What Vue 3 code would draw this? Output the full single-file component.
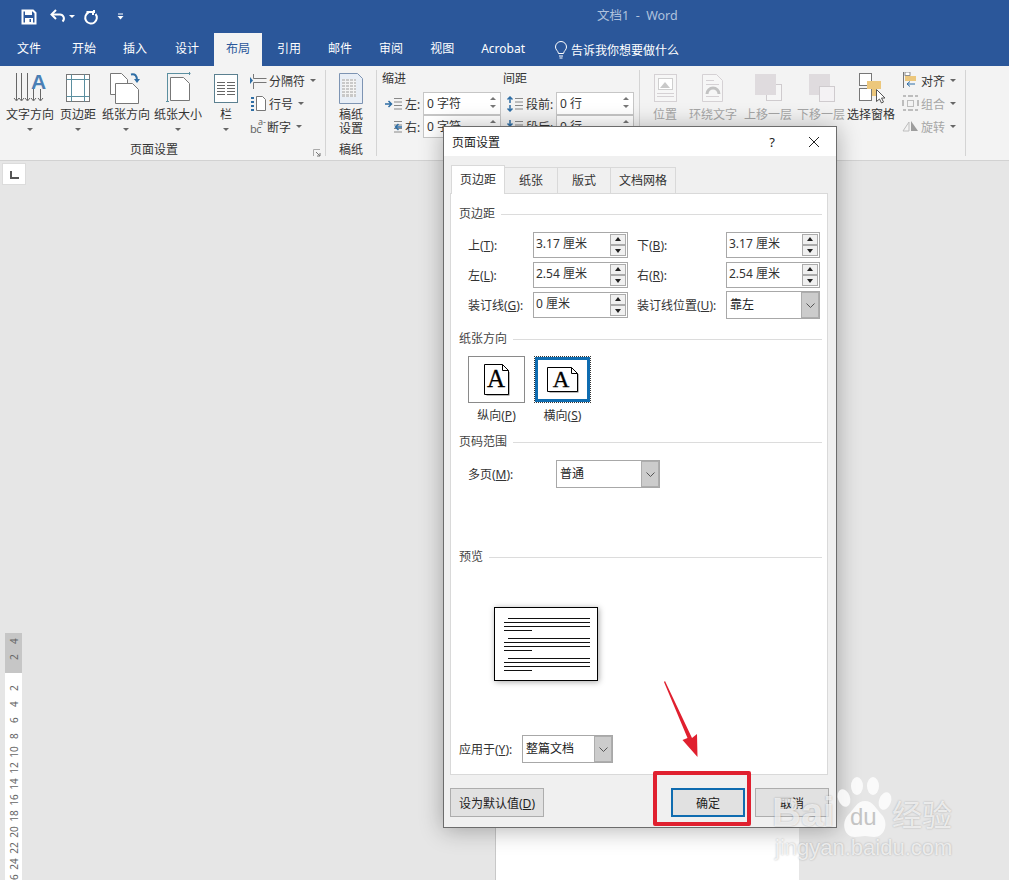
<template>
  <div class="word">
    <header class="titlebar">
      <div class="qat">
        <svg class="qat-save" width="16" height="16" viewBox="0 0 16 16"><path d="M1.500 1.500h10.500l2.500 2.500v10.500h-13z" fill="none" stroke="#fff" stroke-width="2"/><rect x="4" y="2" width="7" height="4" fill="#fff"/><rect x="4" y="9" width="8" height="5" fill="#fff"/><rect x="8.500" y="10" width="1.500" height="3" fill="#2b579a"/></svg>
        <svg class="qat-undo" width="16" height="16" viewBox="0 0 16 16"><path d="M2 5.500h7.500a4 4 0 0 1 3 7" fill="none" stroke="#fff" stroke-width="2"/><path d="M6 1L1.500 5.500 6 10" fill="none" stroke="#fff" stroke-width="2"/></svg>
        <i class="caret white"></i>
        <svg class="qat-redo" width="16" height="16" viewBox="0 0 16 16"><path d="M5.500 3.500a5.800 5.800 0 1 0 7 1.500" fill="none" stroke="#fff" stroke-width="2"/><path d="M3.500 3h7.500V1" fill="none" stroke="#fff" stroke-width="2"/><path d="M10 2v4" stroke="#fff" stroke-width="2"/></svg>
        <svg class="qat-more" width="7" height="7" viewBox="0 0 7 7"><path d="M1 1h5" stroke="#fff"/><path d="M.5 3h6L3.500 6.500z" fill="#fff"/></svg>
      </div>
      <span class="doc-title">文档1 &nbsp;-&nbsp; Word</span>
    </header>

    <nav class="tabs">
      <a v-for="t in ribbonTabs" :key="t" class="tab" :class="{ active: t === '布局' }">{{ t }}</a>
      <span class="tell">
        <svg width="14" height="18" viewBox="0 0 14 18"><path d="M4.500 12.500C4 9.500 1.500 9 1.500 6a5.500 5.500 0 0 1 11 0c0 3-2.500 3.500-3 6.500zM5 15h4M5.500 17h3" fill="none" stroke="#fff"/></svg>
        告诉我你想要做什么
      </span>
    </nav>

    <section class="ribbon">
      <!-- 页面设置 -->
      <div class="group g-page">
        <div class="group-body">
          <button class="big">
            <svg width="48" height="34" viewBox="0 0 48 34"><g stroke="#666" fill="none"><path d="M10.500 3v27M15.500 3v27M21.500 3v27M27.500 19v11M34.500 19v11"/><path d="M8 28l2.500 3 2.500-3M13 28l2.500 3 2.500-3M19 28l2.500 3 2.500-3M25 28l2.500 3 2.500-3M32 28l2.500 3 2.500-3"/></g><text x="32.500" y="18.500" class="ico-a">A</text></svg>
            <span>文字方向</span><i class="caret"></i>
          </button>
          <button class="big">
            <svg width="48" height="34" viewBox="0 0 48 34"><rect x="12.500" y="4.500" width="23" height="27" fill="#fff" stroke="#777"/><path d="M17.500 4.500v27M30.500 4.500v27M12.500 9.500h23M12.500 26.500h23" stroke="#5b8fa0" fill="none"/></svg>
            <span>页边距</span><i class="caret"></i>
          </button>
          <button class="big">
            <svg width="48" height="34" viewBox="0 0 48 34"><path d="M8.500 3.500h11l6 6v15h-17z" fill="#fff" stroke="#777"/><path d="M13.500 13.500h17l6 6v14h-23z" fill="#fff" stroke="#777"/><path d="M29 4.500c4-1 6 1 6 6" fill="none" stroke="#2f6ea5" stroke-width="2"/><path d="M32 9l3 4 3-4z" fill="#2f6ea5"/></svg>
            <span>纸张方向</span><i class="caret"></i>
          </button>
          <button class="big gap-left">
            <svg width="48" height="34" viewBox="0 0 48 34"><path d="M16.500 7.500h13l6 6v17h-19z" fill="#fff" stroke="#777"/><path d="M13.500 3.500h23M13.500 3v28M12 31.500h3M35.500 2v3" stroke="#5b8fa0" fill="none"/></svg>
            <span>纸张大小</span><i class="caret"></i>
          </button>
          <button class="big">
            <svg width="48" height="34" viewBox="0 0 48 34"><rect x="12.500" y="4.500" width="23" height="28" fill="#fff" stroke="#5b8090"/><path d="M15 12.500h8M25 12.500h8M15 15.500h8M25 15.500h8M15 18.500h8M25 18.500h8M15 21.500h8M25 21.500h8M15 24.500h8M25 24.500h8" stroke="#666"/></svg>
            <span>栏</span><i class="caret"></i>
          </button>
          <div class="small-col">
            <div class="small">
              <svg width="17" height="17" viewBox="0 0 17 17"><path d="M3.500 2v4.500h13M3.500 17v-6.500h13" fill="none" stroke="#777"/><path d="M0 5l3 3.500-3 3.500z" fill="#2f6ea5"/></svg>
              分隔符<i class="caret"></i>
            </div>
            <div class="small">
              <svg width="17" height="17" viewBox="0 0 17 17"><path d="M1 3h3M1 7h3M1 11h3M1 15h3" stroke="#2f6ea5" stroke-width="2"/><path d="M6.500 1.500h6l3 3v11h-9z" fill="#fff" stroke="#777"/></svg>
              行号<i class="caret"></i>
            </div>
            <div class="small">
              <span class="bc">bc</span><span class="bc-a">a-</span>
              断字<i class="caret"></i>
            </div>
          </div>
        </div>
        <div class="group-label">页面设置<svg class="launcher" width="8" height="8" viewBox="0 0 8 8"><path d="M.5 7V.5H7" fill="none" stroke="#aaa"/><path d="M3 3l4 4M7 4v3H4" fill="none" stroke="#777"/></svg></div>
      </div>

      <!-- 稿纸 -->
      <div class="group g-draft">
        <div class="group-body">
          <button class="big wrap">
            <svg width="48" height="34" viewBox="0 0 48 34"><path d="M12.500 3.500h18l5 5v25h-23z" fill="#e8eef6" stroke="#7d94b3"/><path d="M15 9h14v18H15z" fill="#c9c9c9"/><path d="M15 11.500h14M15 14.500h14M15 17.500h14M15 20.500h14M15 23.500h14M18.500 9v18M22.500 9v18M26.500 9v18" stroke="#f4f4f4"/></svg>
            <span>稿纸<br />设置</span>
          </button>
        </div>
        <div class="group-label">稿纸</div>
      </div>

      <!-- 段落 -->
      <div class="group g-para">
        <div class="para-grid">
          <div v-for="col in paraCols" :key="col.title" class="para-col" :class="col.cls">
            <div class="para-title">{{ col.title }}</div>
            <div v-for="row in col.rows" :key="row.label" class="para-row">
              <svg width="18" height="16" viewBox="0 0 18 16"><path d="M9 2.500h8M9 6h8M9 9.500h8M9 13h8" stroke="#888" fill="none"/><path :d="row.arrow" fill="none" stroke="#2f6ea5" stroke-width="1.500"/></svg>
              <label>{{ row.label }}</label>
              <div class="para-input">{{ row.value }}<span class="para-spin"><i class="up"></i><i class="down"></i></span></div>
            </div>
          </div>
        </div>
      </div>

      <!-- 排列 -->
      <div class="group g-arrange">
        <div class="group-body">
          <button class="big off">
            <svg width="48" height="34" viewBox="0 0 48 34"><rect x="13.500" y="4.500" width="22" height="27" fill="#f6f6f6" stroke="#d5d1d4"/><rect x="17.500" y="8.500" width="14" height="11" fill="#fff" stroke="#cfcfcf"/><path d="M19 18l5-6 5 6z" fill="#c9c9c9"/><path d="M16 23.500h17M16 26.500h17" stroke="#d5d1d4"/></svg>
            <span>位置</span>
          </button>
          <button class="big off">
            <svg width="48" height="34" viewBox="0 0 48 34"><path d="M13.500 4.500h14l6 6v21h-20z" fill="#f6f6f6" stroke="#d5d1d4"/><path d="M17 10.500h8M17 14.500h13M17 26.500h13" stroke="#d5d1d4"/><path d="M18 24a6 6 0 0 1 12 0" fill="none" stroke="#c2c2c2" stroke-width="3"/></svg>
            <span>环绕文字</span>
          </button>
          <button class="big off up-btn">
            <svg width="48" height="34" viewBox="0 0 48 34"><rect x="22.500" y="14.500" width="15" height="16" fill="#f6f6f6" stroke="#cfcbce"/><rect x="11" y="4" width="21" height="21" fill="#dfdbde"/></svg>
            <span>上移一层</span>
          </button>
          <button class="big off down-btn">
            <svg width="48" height="34" viewBox="0 0 48 34"><rect x="12" y="4" width="21" height="21" fill="#dfdbde"/><rect x="22.500" y="16.500" width="15" height="15" fill="#f4f2f4" stroke="#cfcbce"/></svg>
            <span>下移一层</span>
          </button>
          <button class="big sel-btn">
            <svg width="48" height="34" viewBox="0 0 48 34"><rect x="12.500" y="3.500" width="12" height="12" fill="#fff" stroke="#777"/><rect x="12.500" y="18.500" width="12" height="12" fill="#fff" stroke="#777"/><path d="M20 11h14v8h-5v7h-4v-7h-5z" fill="#ecc77c"/><path d="M29.500 19.500v12l3-2.500 2 4 2-1-2-4h3.500z" fill="#fff" stroke="#555"/></svg>
            <span>选择窗格</span>
          </button>
          <div class="small-col arrange-col">
            <div class="small">
              <svg width="17" height="17" viewBox="0 0 17 17"><path d="M1.500 0v16" stroke="#777"/><rect x="3" y="4" width="11" height="5" fill="#ecc77c"/><path d="M13 12H5M8 9.500L5 12l3 2.500" fill="none" stroke="#2f6ea5"/><rect x="3" y="0" width="5" height="3.500" fill="#fff" stroke="#777" stroke-width=".8"/></svg>
              对齐<i class="caret"></i>
            </div>
            <div class="small off">
              <svg width="17" height="17" viewBox="0 0 17 17"><path d="M1 1h3M13 1h3M1 15h3M13 15h3M1 5v6M16 5v6M6 1h5M6 15h5" stroke="#bdbdbd" stroke-width="2"/><rect x="5.500" y="5.500" width="6" height="6" fill="none" stroke="#bdbdbd"/></svg>
              组合<i class="caret"></i>
            </div>
            <div class="small off">
              <svg width="17" height="17" viewBox="0 0 17 17"><path d="M7 13H1l6-9z" fill="none" stroke="#bdbdbd"/><path d="M9 3v10h7z" fill="#9d9d9d"/></svg>
              旋转<i class="caret"></i>
            </div>
          </div>
        </div>
      </div>
    </section>

    <main class="workspace">
      <div class="left-rail">
        <div class="tab-stop"><span></span></div>
        <div class="v-ruler">
          <div class="ruler-gray"><b v-for="n in [4, 2]" :key="n">{{ n }}</b></div>
          <div class="ruler-white"><b v-for="n in rulerNums" :key="n">{{ n }}</b></div>
        </div>
      </div>
      <div class="page"></div>
    </main>

    <!-- 对话框 -->
    <div class="dialog">
      <div class="dlg-title">
        <span>页面设置</span>
        <span class="help">?</span>
        <svg width="12" height="12" viewBox="0 0 12 12"><path d="M1 1l10 10M11 1L1 11" stroke="#222" fill="none"/></svg>
      </div>
      <div class="dlg-tabs">
        <div v-for="t in dialogTabs" :key="t" class="dlg-tab" :class="{ on: t === '页边距' }">{{ t }}</div>
      </div>
      <div class="panel">
        <div class="heading"><span>页边距</span></div>
        <div class="margin-grid">
          <template v-for="f in marginFields" :key="f.label">
            <label>{{ f.label }}(<u>{{ f.key }}</u>):</label>
            <div class="spin-input">
              <span>{{ f.value }}</span>
              <div class="spin"><i class="up"></i><i class="down"></i></div>
            </div>
          </template>
          <label>装订线位置(<u>U</u>):</label>
          <div class="select">
            <span>靠左</span>
            <div class="select-btn"><svg width="9" height="5" viewBox="0 0 9 5"><path d="M.5.500l4 4 4-4" fill="none" stroke="#555"/></svg></div>
          </div>
        </div>

        <div class="heading h-orient"><span>纸张方向</span></div>
        <div class="orient">
          <div class="orient-item">
            <div class="orient-btn">
              <svg width="26" height="32" viewBox="0 0 26 32"><path d="M2.500 2.500h17l6 6v23h-23z" fill="#777"/><path d="M.5.500h18l6 6v24H.5z" fill="#fff" stroke="#000"/><path d="M18.500.5v6h6" fill="none" stroke="#000"/><text x="12" y="23" class="ico-serif">A</text></svg>
            </div>
            <span>纵向(<u>P</u>)</span>
          </div>
          <div class="orient-item">
            <div class="orient-btn focused">
              <svg width="32" height="26" viewBox="0 0 32 26"><path d="M2.500 2.500h24l5 5v18h-29z" fill="#777"/><path d="M.5.500h24l6 6v18H.5z" fill="#fff" stroke="#000"/><path d="M24.500.5v6h6" fill="none" stroke="#000"/><text x="14" y="20" class="ico-serif land">A</text></svg>
            </div>
            <span>横向(<u>S</u>)</span>
          </div>
        </div>

        <div class="heading h-range"><span>页码范围</span></div>
        <div class="pages-row">
          <label>多页(<u>M</u>):</label>
          <div class="select wide">
            <span>普通</span>
            <div class="select-btn"><svg width="9" height="5" viewBox="0 0 9 5"><path d="M.5.500l4 4 4-4" fill="none" stroke="#555"/></svg></div>
          </div>
        </div>

        <div class="heading h-preview"><span>预览</span></div>
        <div class="paper">
          <svg width="102" height="72" viewBox="0 0 102 72">
            <g v-for="g in [0, 20, 40]" :key="g" stroke="#111">
              <path :d="`M13 ${10.5 + g}H95M9 ${14.5 + g}H95M9 ${18.5 + g}H95M9 ${22.5 + g}H37`" fill="none" />
            </g>
          </svg>
        </div>
        <div class="apply-row">
          <label>应用于(<u>Y</u>):</label>
          <div class="select apply">
            <span>整篇文档</span>
            <div class="select-btn"><svg width="9" height="5" viewBox="0 0 9 5"><path d="M.5.500l4 4 4-4" fill="none" stroke="#555"/></svg></div>
          </div>
        </div>
      </div>
      <div class="dlg-footer">
        <button class="dlg-btn default-btn">设为默认值(<u>D</u>)</button>
        <button class="dlg-btn ok">确定</button>
        <button class="dlg-btn">取消</button>
      </div>
    </div>

    <!-- 标注 -->
    <div class="red-box"></div>
    <svg class="red-arrow" width="50" height="90" viewBox="0 0 50 90"><path d="M4 3l27 57 5-4 .5 23-15-17 5-2L3 4z" fill="#e0202f"/></svg>

    <!-- 水印 -->
    <div class="watermark">
      <span class="wm-bai">Bai</span>
      <svg class="wm-paw" width="68" height="66" viewBox="0 0 68 66">
        <g fill="rgba(255,255,255,.8)">
          <ellipse cx="9" cy="23" rx="6" ry="9" transform="rotate(-20 9 23)"/>
          <ellipse cx="22" cy="11" rx="6" ry="9"/>
          <ellipse cx="38" cy="11" rx="6" ry="9"/>
          <ellipse cx="50" cy="26" rx="6" ry="9" transform="rotate(20 50 26)"/>
          <path d="M30 26c8 0 11 8 17 14 7 8 3 22-8 22-4 0-6-1-9-1s-6 1-10 1C9 62 6 48 13 40c6-6 9-14 17-14z"/>
        </g>
      </svg>
      <span class="wm-du">du</span>
      <span class="wm-cn">经验</span>
      <span class="wm-url">jingyan.baidu.com</span>
    </div>
  </div>
</template>

<script setup>
const ribbonTabs = ['文件', '开始', '插入', '设计', '布局', '引用', '邮件', '审阅', '视图', 'Acrobat']
const dialogTabs = ['页边距', '纸张', '版式', '文档网格']
const rulerNums = [2, 4, 6, 8, 10, 12, 14, 16, 18, 20, 22, 24, 26]

const paraCols = [
  {
    title: '缩进',
    cls: 'indent',
    rows: [
      { label: '左:', value: '0 字符', arrow: 'M0 8h6M3.500 5l3 3-3 3' },
      { label: '右:', value: '0 字符', arrow: 'M17 8h-6M13.500 5l-3 3 3 3' },
    ],
  },
  {
    title: '间距',
    cls: 'spacing',
    rows: [
      { label: '段前:', value: '0 行', arrow: 'M4 1v6M1.500 3.500L4 1l2.500 2.500M4 9v6M1.500 12.500L4 15l2.500-2.500' },
      { label: '段后:', value: '0 行', arrow: 'M4 1v6M1.500 4.500L4 7l2.500-2.500M4 9v6M1.500 11.500L4 9l2.500 2.500' },
    ],
  },
]

const marginFields = [
  { label: '上', key: 'T', value: '3.17 厘米' },
  { label: '下', key: 'B', value: '3.17 厘米' },
  { label: '左', key: 'L', value: '2.54 厘米' },
  { label: '右', key: 'R', value: '2.54 厘米' },
  { label: '装订线', key: 'G', value: '0 厘米' },
]
</script>

<style>
html, body {
  margin: 0;
  background: #e6e6e6;
}
</style>

<style scoped>
.word {
  position: relative;
  width: 1009px;
  height: 880px;
  overflow: hidden;
  font-family: "Noto Sans", "Noto Sans CJK SC", sans-serif;
  font-size: 12px;
  color: #333;
  background: #e6e6e6;
}

.titlebar {
  display: flex;
  align-items: center;
  height: 33px;
  background: #2b579a;
}

.qat {
  display: flex;
  align-items: center;
  width: 597px;
  padding-left: 21px;
  box-sizing: border-box;
}

.qat-undo { margin-left: 13px; }
.qat-redo { margin-left: 8px; }
.qat .caret { margin: 0 0 0 3px; }
.qat-more { margin-left: 18px; }

.doc-title {
  margin-bottom: 4px;
  color: #b0c2dd;
  font-size: 12.5px;
}

.tabs {
  display: flex;
  align-items: stretch;
  height: 33px;
  padding-left: 5px;
  gap: 3px;
  background: #2b579a;
}

.tab {
  padding: 0 12px;
  line-height: 32px;
  color: #fff;
  font-size: 12px;
}

.tab:first-child { margin-right: 4px; }
.tab:nth-child(4) { margin-left: 1px; }

.tab.active {
  background: #f3f3f3;
  color: #2b579a;
}

.tell {
  display: flex;
  align-items: center;
  gap: 3px;
  margin-left: 14px;
  color: #fff;
}

.ribbon {
  display: flex;
  height: 95px;
  box-sizing: border-box;
  background: #f3f3f3;
  border-bottom: 1px solid #d2d2d2;
}

.group {
  position: relative;
  box-sizing: border-box;
  height: 86px;
  margin-top: 4px;
  border-right: 1px solid #d4d4d4;
}

.g-page { width: 326px; padding-left: 6px; }
.g-draft { width: 51px; }
.g-para { width: 263px; }
.g-arrange { width: 326px; }

.group-body {
  display: flex;
  height: 72px;
}

.group-label {
  position: relative;
  text-align: center;
  line-height: 16px;
  height: 14px;
}

.g-page .group-label { width: 296px; }

.launcher {
  position: absolute;
  right: -19px;
  top: 7px;
}

.big {
  display: flex;
  flex-direction: column;
  align-items: center;
  width: 48px;
  padding: 0;
  border: 0;
  background: none;
  font: inherit;
  color: inherit;
  white-space: nowrap;
}

.big svg { display: block; }

.big span {
  margin-top: 4px;
  line-height: 14px;
  height: 14px;
}

.big .caret { margin-top: 6px; }
.big.wrap span { height: auto; }
.big.off { color: #a6a6a6; }
.gap-left { margin-left: 4px; }
.g-draft .group-body { padding-left: 1px; }
.g-arrange .group-body { padding-left: 1px; }
.up-btn { margin-left: 7px; }
.down-btn { margin-left: 5px; }
.sel-btn { margin-left: 2px; }

.caret {
  display: inline-block;
  width: 0;
  height: 0;
  border-left: 3px solid transparent;
  border-right: 3px solid transparent;
  border-top: 3px solid #666;
}

.caret.white { border-top-color: #fff; }

.ico-a {
  font-family: "Liberation Sans", sans-serif;
  font-size: 21px;
  font-weight: 700;
  fill: #4a7fb5;
  text-anchor: middle;
}

.ico-serif {
  font-family: "Liberation Serif", serif;
  font-size: 25px;
  fill: #000;
  stroke: #000;
  stroke-width: .3px;
  text-anchor: middle;
}

.ico-serif.land { font-size: 23px; }

.small-col {
  display: flex;
  flex-direction: column;
  gap: 6px;
  padding-top: 2px;
}

.small {
  display: flex;
  align-items: center;
  gap: 2px;
  height: 17px;
  white-space: nowrap;
}

.small .caret { margin: 0 0 0 3px; }
.small.off { color: #a6a6a6; }

.bc {
  width: 9px;
  margin-top: 4px;
  color: #666;
  font-size: 11px;
  line-height: 14px;
  letter-spacing: -.5px;
}

.bc-a {
  width: 6px;
  margin: -9px 1px 0 -3px;
  color: #666;
  font-size: 9px;
  line-height: 10px;
}

.arrange-col { margin-left: 7px; }

.para-grid {
  display: flex;
  padding-left: 5px;
}

.indent { width: 121px; }

.para-title {
  line-height: 16px;
  height: 16px;
  margin-top: 1px;
  margin-bottom: 5px;
}

.para-row {
  display: flex;
  align-items: center;
  height: 23px;
}

.para-row svg { margin-left: 3px; flex: none; }
.para-row label { margin-left: 2px; white-space: nowrap; }
.indent .para-row label { width: 18px; }
.spacing .para-row label { width: 30px; }

.para-input {
  position: relative;
  box-sizing: border-box;
  width: 78px;
  height: 23px;
  padding-left: 3px;
  line-height: 21px;
  background: #fff;
  border: 1px solid #c6c6c6;
}

.para-spin {
  position: absolute;
  right: 4px;
  top: 4px;
  display: flex;
  flex-direction: column;
  gap: 5px;
}

.para-spin i, .spin i {
  display: block;
  width: 0;
  height: 0;
  border-left: 3px solid transparent;
  border-right: 3px solid transparent;
}

.para-spin .up { border-bottom: 3px solid #777; }
.para-spin .down { border-top: 3px solid #777; }

.workspace {
  display: flex;
  height: 719px;
}

.left-rail {
  width: 495px;
  flex: none;
}

.tab-stop {
  box-sizing: border-box;
  width: 22px;
  height: 20px;
  margin: 3px 0 0 3px;
  padding: 7px 0 0 7px;
  background: #fff;
  box-shadow: 0 0 0 1px #dcdcdc;
}

.tab-stop span {
  display: block;
  width: 7px;
  height: 6px;
  border-left: 2px solid #555;
  border-bottom: 2px solid #555;
}

.v-ruler {
  width: 17px;
  margin: 449px 0 0 5px;
  text-align: center;
  color: #666;
  font-size: 10px;
}

.ruler-gray {
  height: 40px;
  background: #c6c6c6;
}

.ruler-white {
  background: #fff;
  height: 210px;
  padding-top: 7px;
  box-sizing: border-box;
  overflow: hidden;
}

.v-ruler b {
  display: block;
  height: 16px;
  line-height: 16px;
  font-weight: 400;
  transform: rotate(-90deg);
}

.page {
  width: 303px;
  height: 119px;
  margin-top: 600px;
  background: #fff;
  border-left: 1px solid #c8c8c8;
}

/* dialog */
.dialog {
  position: absolute;
  left: 443px;
  top: 126px;
  box-sizing: border-box;
  width: 394px;
  height: 702px;
  background: #f0f0f0;
  border: 1px solid #6c6c6c;
  box-shadow: 0 2px 22px rgba(0, 0, 0, .3);
}

.dlg-title {
  display: flex;
  align-items: center;
  height: 29px;
  padding: 0 16px 0 8px;
  background: #fff;
  color: #222;
}

.help {
  margin-left: auto;
  margin-right: 33px;
  font-size: 13px;
}

.dlg-tabs {
  display: flex;
  height: 27px;
  margin-top: 10px;
  padding-left: 7px;
}

.dlg-tab {
  box-sizing: border-box;
  padding: 0 14px;
  height: 26px;
  margin-top: 1px;
  line-height: 25px;
  border: 1px solid #d9d9d9;
  border-left: 0;
  border-bottom: 0;
  background: #f0f0f0;
}

.dlg-tab:last-child { padding: 0 8px; }

.dlg-tab.on {
  position: relative;
  z-index: 1;
  height: 29px;
  margin-top: -1px;
  padding: 0 8px;
  line-height: 27px;
  border-left: 1px solid #d9d9d9;
  background: #fff;
}

.panel {
  box-sizing: border-box;
  width: 378px;
  height: 582px;
  margin-left: 6px;
  padding: 12px 5px 0 8px;
  background: #fff;
  border: 1px solid #d9d9d9;
}

.heading {
  display: flex;
  align-items: center;
  gap: 6px;
  height: 16px;
  line-height: 16px;
  color: #444;
}

.heading::after {
  content: "";
  flex: 1;
  height: 1px;
  background: #dcdcdc;
}

.margin-grid {
  display: grid;
  grid-template-columns: 65px 95px 98px 94px;
  row-gap: 4px;
  grid-auto-rows: 26px;
  margin-top: 10px;
  padding-left: 9px;
  align-items: center;
}

.margin-grid label:nth-child(4n + 3) { padding-left: 9px; }
.margin-grid > label { white-space: nowrap; color: #333; }

.spin-input {
  position: relative;
  box-sizing: border-box;
  height: 26px;
  padding-left: 2px;
  line-height: 22px;
  border: 1px solid #a8a8a8;
  background: #fff;
}

.spin {
  position: absolute;
  top: 1px;
  right: 1px;
  display: flex;
  flex-direction: column;
  width: 16px;
  height: 22px;
}

.spin i {
  position: relative;
  box-sizing: border-box;
  width: 16px;
  height: 11px;
  border: 1px solid #ababab;
  background: #f0f0f0;
}

.spin i::after {
  content: "";
  position: absolute;
  left: 4px;
  width: 0;
  height: 0;
  border-left: 3px solid transparent;
  border-right: 3px solid transparent;
}

.spin .up::after { top: 2px; border-bottom: 4px solid #222; }
.spin .down::after { top: 3px; border-top: 4px solid #222; }

.select {
  display: flex;
  box-sizing: border-box;
  height: 28px;
  line-height: 26px;
  border: 1px solid #a8a8a8;
  background: #fff;
}

.select span {
  flex: 1;
  padding-left: 3px;
  color: #222;
}

.select-btn {
  display: flex;
  align-items: center;
  justify-content: center;
  width: 17px;
  background: #ccc;
  border-left: 1px solid #adadad;
  outline: 1px solid #adadad;
  outline-offset: -1px;
}

.h-orient { margin-top: 13px; }

.orient {
  display: flex;
  gap: 9px;
  margin-top: 9px;
  padding-left: 9px;
}

.orient-item {
  display: flex;
  flex-direction: column;
  align-items: center;
  gap: 5px;
  width: 57px;
}

.orient-item span { line-height: 16px; }

.orient-btn {
  box-sizing: border-box;
  display: flex;
  align-items: center;
  justify-content: center;
  width: 57px;
  height: 47px;
  border: 1px solid #8a8a8a;
  background: #fff;
}

.orient-btn.focused {
  border: 1px dotted #333;
  box-shadow: inset 0 0 0 3px #0f6cb0;
}

.h-range { margin-top: 10px; }

.pages-row {
  display: flex;
  align-items: center;
  margin-top: 10px;
  padding-left: 9px;
}

.pages-row label { width: 88px; }
.select.wide { width: 104px; }

.h-preview { margin-top: 61px; }

.paper {
  box-sizing: border-box;
  width: 104px;
  height: 74px;
  margin: 42px 0 0 35px;
  background: #fff;
  border: 1px solid #000;
  box-shadow: 1px 1px 6px rgba(0, 0, 0, .35);
}

.paper svg { display: block; }

.apply-row {
  display: flex;
  align-items: center;
  margin-top: 54px;
}

.apply-row label { width: 63px; white-space: nowrap; }
.select.apply { width: 91px; }

.dlg-footer {
  display: flex;
  margin-top: 13px;
  padding-left: 6px;
}

.dlg-btn {
  box-sizing: border-box;
  width: 74px;
  height: 29px;
  margin-left: 10px;
  padding: 0;
  font: inherit;
  color: #222;
  background: #e1e1e1;
  border: 1px solid #adadad;
}

.default-btn {
  width: 94px;
  margin-left: 0;
  margin-right: 117px;
}

.ok {
  border: 2px solid #0f6cb0;
}

/* annotation */
.red-box {
  position: absolute;
  left: 653px;
  top: 771px;
  box-sizing: border-box;
  width: 98px;
  height: 55px;
  border: 4px solid #e0202f;
  border-radius: 2px;
}

.red-arrow {
  position: absolute;
  left: 661px;
  top: 678px;
}

/* watermark */
.watermark {
  position: absolute;
  left: 770px;
  top: 770px;
  width: 200px;
  height: 100px;
  color: rgba(255, 255, 255, .72);
  font-family: "Liberation Sans", sans-serif;
  text-shadow: 0 0 2px rgba(0, 0, 0, .28);
}

.watermark span {
  position: absolute;
  white-space: nowrap;
  line-height: 1;
}

.wm-bai {
  left: 2px;
  top: 22px;
  font-size: 40px;
  font-weight: 700;
}

.wm-paw {
  position: absolute;
  left: 65px;
  top: 5px;
}

.wm-du {
  left: 80px;
  top: 35px;
  font-size: 24px;
  color: #c4c4c4;
  text-shadow: none;
}

.wm-cn {
  left: 122px;
  top: 28px;
  font-size: 30px;
  font-family: "Noto Sans CJK SC", sans-serif;
}

.wm-url {
  left: 5px;
  top: 67px;
  font-size: 22px;
}
</style>
